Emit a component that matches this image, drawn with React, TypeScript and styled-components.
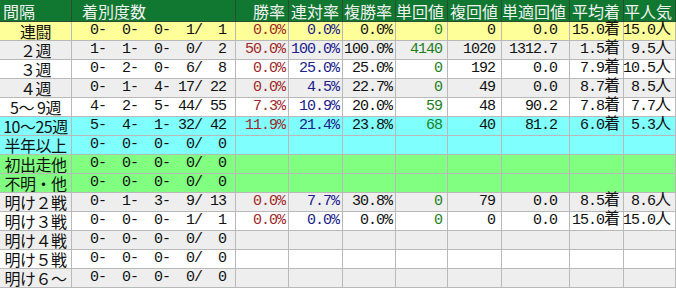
import * as React from 'react'
import styled, { createGlobalStyle } from 'styled-components'

type Tone = 'yellow' | 'gray' | 'white' | 'cyan' | 'green'
type Ink = 'red' | 'blue' | 'green' | 'black'

interface Row {
	label: string
	tone: Tone
	record: string
	values?: string[]
}

const COLS = [72, 164, 53, 54, 53, 52, 54, 68, 54, 52]
const HEAD = ['間隔', '着別度数', '勝率', '連対率', '複勝率', '単回値', '複回値', '単適回値', '平均着', '平人気']
const INKS: Ink[] = ['red', 'blue', 'black', 'green', 'black', 'black', 'black', 'black']
const PADS = [3, 3, 3, 5, 6, 12, 3, 4]

const ROWS: Row[] = [
	{ label: '連闘', tone: 'yellow', record: '  0-  0-  0-  1/  1', values: ['0.0%', '0.0%', '0.0%', '0', '0', '0.0', '15.0着', '15.0人'] },
	{ label: '２週', tone: 'gray', record: '  1-  1-  0-  0/  2', values: ['50.0%', '100.0%', '100.0%', '4140', '1020', '1312.7', '1.5着', '9.5人'] },
	{ label: '３週', tone: 'white', record: '  0-  2-  0-  6/  8', values: ['0.0%', '25.0%', '25.0%', '0', '192', '0.0', '7.9着', '10.5人'] },
	{ label: '４週', tone: 'gray', record: '  0-  1-  4- 17/ 22', values: ['0.0%', '4.5%', '22.7%', '0', '49', '0.0', '8.7着', '8.5人'] },
	{ label: '5～ 9週', tone: 'white', record: '  4-  2-  5- 44/ 55', values: ['7.3%', '10.9%', '20.0%', '59', '48', '90.2', '7.8着', '7.7人'] },
	{ label: '10～25週', tone: 'cyan', record: '  5-  4-  1- 32/ 42', values: ['11.9%', '21.4%', '23.8%', '68', '40', '81.2', '6.0着', '5.3人'] },
	{ label: '半年以上', tone: 'cyan', record: '  0-  0-  0-  0/  0' },
	{ label: '初出走他', tone: 'green', record: '  0-  0-  0-  0/  0' },
	{ label: '不明・他', tone: 'green', record: '  0-  0-  0-  0/  0' },
	{ label: '明け２戦', tone: 'gray', record: '  0-  1-  3-  9/ 13', values: ['0.0%', '7.7%', '30.8%', '0', '79', '0.0', '8.5着', '8.6人'] },
	{ label: '明け３戦', tone: 'white', record: '  0-  0-  0-  1/  1', values: ['0.0%', '0.0%', '0.0%', '0', '0', '0.0', '15.0着', '15.0人'] },
	{ label: '明け４戦', tone: 'gray', record: '  0-  0-  0-  0/  0' },
	{ label: '明け５戦', tone: 'white', record: '  0-  0-  0-  0/  0' },
	{ label: '明け６～', tone: 'gray', record: '  0-  0-  0-  0/  0' },
]

const toneColor: Record<Tone, string> = {
	yellow: '#ffff99',
	gray: '#eeeeee',
	white: '#ffffff',
	cyan: '#80ffff',
	green: '#80ff80',
}

const inkColor: Record<Ink, string> = {
	red: '#a02828',
	blue: '#20208c',
	green: '#1e7e1e',
	black: '#111111',
}

// split "15.0着" into number + unit so the kanji keeps full width
const renderValue = (v: string) => {
	const m = v.match(/^(.*?)([着人])$/)
	if (!m) return <Value>{v}</Value>
	return (
		<Value>
			{m[1]}
			<Unit>{m[2]}</Unit>
		</Value>
	)
}

export default function App() {
	return (
		<>
			<GlobalStyle />
			<Grid>
				{HEAD.map((h, i) => (
					<HeadCell key={h} $align={i < 2 ? 'left' : 'right'} $pad={i === 1 ? 10 : 3}>
						{h}
					</HeadCell>
				))}
				{ROWS.map((r) => (
					<React.Fragment key={r.label}>
						<LabelCell $tone={r.tone}>{r.label}</LabelCell>
						<NumCell $tone={r.tone} $ink="black" $pad={9}>
							{r.record}
						</NumCell>
						{INKS.map((ink, i) => (
							<NumCell key={i} $tone={r.tone} $ink={ink} $pad={PADS[i]}>
								{r.values ? renderValue(r.values[i]) : ''}
							</NumCell>
						))}
					</React.Fragment>
				))}
			</Grid>
		</>
	)
}

const GlobalStyle = createGlobalStyle`
	html, body {
		margin: 0;
		padding: 0;
		background: #ffffff;
	}
`

const Grid = styled.div`
	display: grid;
	grid-template-columns: ${COLS.map((c) => c + 'px').join(' ')};
	grid-template-rows: 22px repeat(14, 19px);
	width: 676px;
	overflow: hidden;
`

const HeadCell = styled.div<{ $align: 'left' | 'right'; $pad: number }>`
	box-sizing: border-box;
	display: flex;
	align-items: center;
	justify-content: ${(p) => (p.$align === 'left' ? 'flex-start' : 'flex-end')};
	background: #107830;
	color: #f2f2f2;
	border-right: 1px solid #2c4c32;
	border-bottom: 1px solid #2c4c32;
	font-family: 'Noto Sans CJK JP', sans-serif;
	font-size: 16px;
	line-height: 16px;
	white-space: nowrap;
	padding: 0 ${(p) => (p.$align === 'right' ? p.$pad : 0)}px 0 ${(p) => (p.$align === 'left' ? p.$pad : 0)}px;
`

const BodyCell = styled.div<{ $tone: Tone }>`
	box-sizing: border-box;
	display: flex;
	align-items: center;
	background: ${(p) => toneColor[p.$tone]};
	border-right: 1px solid #b9b9b9;
	border-bottom: 1px solid #b9b9b9;
	white-space: pre;
	line-height: 16px;
`

const LabelCell = styled(BodyCell)`
	justify-content: center;
	color: #111111;
	font-family: 'Noto Sans CJK JP', sans-serif;
	font-size: 16px;
	letter-spacing: -0.5px;
`

const NumCell = styled(BodyCell)<{ $ink: Ink; $pad: number }>`
	justify-content: flex-end;
	padding-right: ${(p) => p.$pad}px;
	color: ${(p) => inkColor[p.$ink]};
	font-family: 'Liberation Mono', 'Noto Sans CJK JP', monospace;
	font-size: 15px;
	letter-spacing: -1px;
`

const Value = styled.span`
	display: block;
	line-height: 16px;
`

const Unit = styled.span`
	font-family: 'Noto Sans CJK JP', sans-serif;
	font-size: 16px;
	line-height: 0;
	letter-spacing: 0;
`
